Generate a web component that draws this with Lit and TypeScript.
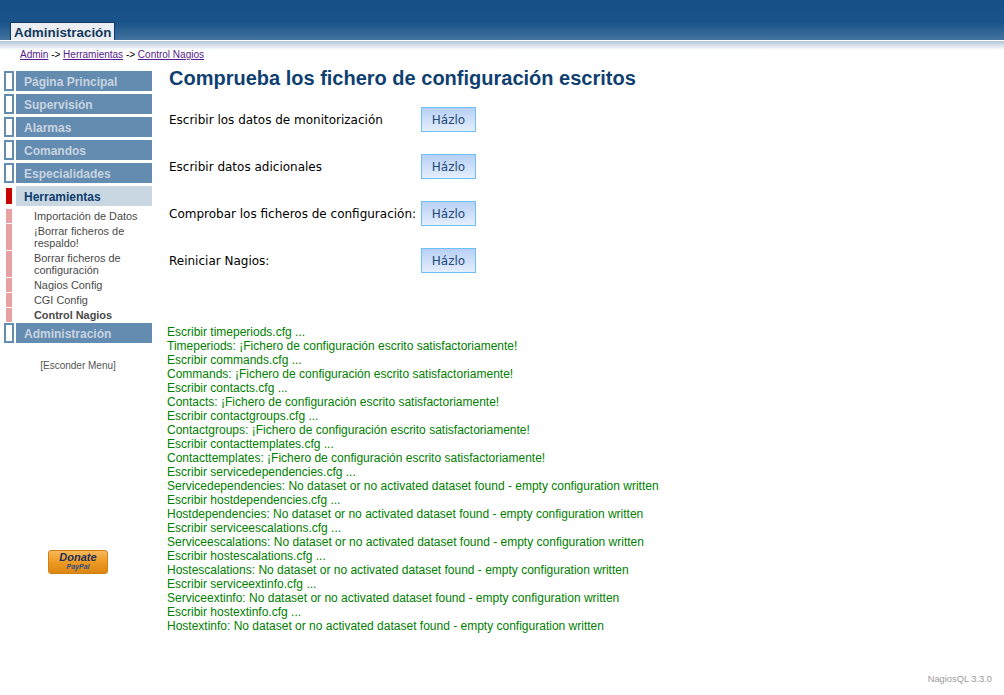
import { LitElement, html, css } from "lit";
import { customElement } from "lit/decorators.js";

const topMenu = ["Página Principal", "Supervisión", "Alarmas", "Comandos", "Especialidades"];
const subMenu = [
  { t: "Importación de Datos" },
  { t: "¡Borrar ficheros de respaldo!" },
  { t: "Borrar ficheros de configuración" },
  { t: "Nagios Config" },
  { t: "CGI Config" },
  { t: "Control Nagios", on: true },
];
const actions = ["Escribir los datos de monitorización", "Escribir datos adicionales", "Comprobar los ficheros de configuración:", "Reiniciar Nagios:"];
const ok = "¡Fichero de configuración escrito satisfactoriamente!";
const none = "No dataset or no activated dataset found - empty configuration written";
const log = [
  "Escribir timeperiods.cfg ...", `Timeperiods: ${ok}`,
  "Escribir commands.cfg ...", `Commands: ${ok}`,
  "Escribir contacts.cfg ...", `Contacts: ${ok}`,
  "Escribir contactgroups.cfg ...", `Contactgroups: ${ok}`,
  "Escribir contacttemplates.cfg ...", `Contacttemplates: ${ok}`,
  "Escribir servicedependencies.cfg ...", `Servicedependencies: ${none}`,
  "Escribir hostdependencies.cfg ...", `Hostdependencies: ${none}`,
  "Escribir serviceescalations.cfg ...", `Serviceescalations: ${none}`,
  "Escribir hostescalations.cfg ...", `Hostescalations: ${none}`,
  "Escribir serviceextinfo.cfg ...", `Serviceextinfo: ${none}`,
  "Escribir hostextinfo.cfg ...", `Hostextinfo: ${none}`,
];

@customElement("app-root")
export class AppRoot extends LitElement {
  static styles = css`
    :host { display: flex; flex-direction: column; height: 695px; overflow: hidden; background: #fff;
      font-family: "Liberation Sans", Arial, sans-serif; }
    .header { height: 40px; box-sizing: border-box; padding: 22px 0 0 10px; display: flex;
      background: linear-gradient(#164f86 0, #195389 22px, #43739f 40px); }
    .tab { height: 18px; width: 105px; box-sizing: border-box; border: 1px solid #0e3a63; border-bottom: 0;
      background: #eceef1; color: #12395f; font: bold 13.4px/20px "Liberation Sans", Arial, sans-serif;
      padding-left: 3px; white-space: nowrap; overflow: hidden; }
    .rule { height: 1px; background: #fff; }
    .fade { height: 9px; background: linear-gradient(#b3c4d6, #fff); }
    .crumbs { height: 21px; padding: 0 0 0 20px; font-size: 10px; line-height: 9px; color: #000; white-space: pre; }
    .crumbs a { color: #551a8b; text-decoration: underline; }
    .body { display: flex; flex: 1; min-height: 0; }
    .side { width: 169px; flex: none; padding-left: 4px; box-sizing: border-box; display: flex; flex-direction: column; }
    .top { display: flex; height: 20px; margin-bottom: 3px; }
    .mark { width: 10px; height: 20px; box-sizing: border-box; border: 2px solid #648cb0; background: #fff; flex: none; }
    .top.on .mark { border-color: #fff; background: #c80000; }
    .label { margin-left: 2px; width: 136px; background: #648cb0; color: #c8d4e0; font: bold 12px/22px "Liberation Sans", Arial, sans-serif;
      padding-left: 8px; box-sizing: border-box; }
    .top.on .label { background: #c9d7e3; color: #0c3c6c; }
    .subs { display: flex; flex-direction: column; gap: 1px; margin-bottom: 1px; }
    .sub { display: flex; }
    .sub .bar { width: 6px; margin-left: 2px; background: #e9a0a2; flex: none; }
    .sub .txt { margin-left: 22px; width: 108px; font-size: 10.9px; line-height: 12px; color: #4a4a4a; padding: 1px 0; }
    .sub .txt.cur { font-weight: bold; }
    .hide { margin-top: 14px; width: 148px; text-align: center; font-size: 10px; line-height: 12px; color: #555; }
    .donate { margin: 178px 0 0 44px; width: 60px; height: 24px; box-sizing: border-box; border: 1px solid #d07f12; border-radius: 3px;
      background: linear-gradient(#f8b85a 0, #ec9a24 50%, #dc8713 100%); display: flex; flex-direction: column; align-items: center;
      font-style: italic; font-weight: bold; color: #1c2f5c; }
    .donate b { font-size: 11px; line-height: 11px; margin-top: 1px; }
    .donate i { font-size: 7px; line-height: 8px; color: #2b4a86; }
    .main { flex: 1; min-width: 0; display: flex; flex-direction: column; }
    h1 { margin: 0; font: bold 20px/14px "Liberation Sans", Arial, sans-serif; color: #0f3f70; height: 25px; }
    .row { display: flex; align-items: center; height: 47px; }
    .row span { width: 252px; flex: none; font: 12px "DejaVu Sans", Verdana, sans-serif; color: #000; white-space: nowrap; }
    .btn { width: 55px; height: 25px; box-sizing: border-box; border: 1px solid #6cc1fa; background: linear-gradient(#b8d0f4, #e4eefd);
      color: #234a78; font: 12px/24px "DejaVu Sans", Verdana, sans-serif; text-align: center; }
    .log { margin: 41px 0 0 -2px; font-size: 12px; line-height: 14px; color: #008000; white-space: nowrap; }
    .foot { position: absolute; right: 12px; top: 673px; font-size: 9.3px; line-height: 12px; color: #9a9a9a; }
  `;

  render() {
    return html`
      <div class="header"><div class="tab">Administración</div></div>
      <div class="rule"></div>
      <div class="fade"></div>
      <div class="crumbs"><a>Admin</a> -> <a>Herramientas</a> -> <a>Control Nagios</a></div>
      <div class="body">
        <nav class="side">
          ${topMenu.map((t) => html`<div class="top"><div class="mark"></div><div class="label">${t}</div></div>`)}
          <div class="top on"><div class="mark"></div><div class="label">Herramientas</div></div>
          <div class="subs">
            ${subMenu.map((s) => html`<div class="sub"><div class="bar"></div><div class="txt ${s.on ? "cur" : ""}">${s.t}</div></div>`)}
          </div>
          <div class="top"><div class="mark"></div><div class="label">Administración</div></div>
          <div class="hide">[Esconder Menu]</div>
          <div class="donate"><b>Donate</b><i>PayPal</i></div>
        </nav>
        <main class="main">
          <h1>Comprueba los fichero de configuración escritos</h1>
          ${actions.map((a) => html`<div class="row"><span>${a}</span><div class="btn">Házlo</div></div>`)}
          <div class="log">${log.map((l) => html`<div>${l}</div>`)}</div>
        </main>
      </div>
      <div class="foot">NagiosQL 3.3.0</div>
    `;
  }
}
